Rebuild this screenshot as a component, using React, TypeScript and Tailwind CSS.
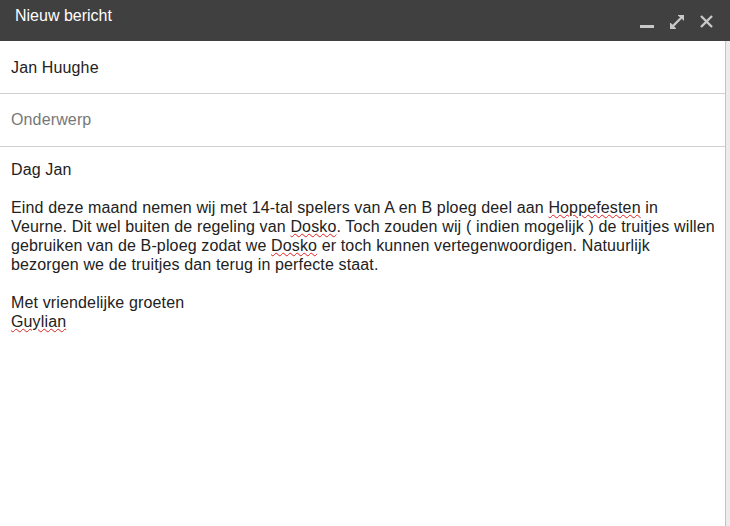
const font = { fontFamily: '"Liberation Sans", Arial, sans-serif' };

function MinimizeIcon() {
  return (
    <svg width="14" height="14" viewBox="0 0 14 14">
      <rect x="0" y="10" width="14" height="3" fill="#c8c8c8" />
    </svg>
  );
}

function ExpandIcon() {
  return (
    <svg width="14" height="14" viewBox="0 0 14 14" fill="#c8c8c8">
      <path d="M8 0h6v6l-2.2-2.2-7.6 7.6L6 13.2V14H0V8h.8l1.8 1.8 7.6-7.6L8 .8z" />
    </svg>
  );
}

function CloseIcon() {
  return (
    <svg width="13" height="13" viewBox="0 0 13 13" stroke="#c8c8c8" strokeWidth="2.4">
      <path d="M1 1l11 11M12 1L1 12" />
    </svg>
  );
}

function Misspelled({ children }: { children: React.ReactNode }) {
  return (
    <span className="underline decoration-wavy decoration-[#e02020] decoration-1 underline-offset-[1px]">
      {children}
    </span>
  );
}

export default function App() {
  return (
    <div className="w-[730px] h-[526px] flex flex-col bg-[#ececec] overflow-hidden" style={font}>
      <div className="h-[41px] shrink-0 bg-[#404040] flex items-center pl-[15px] pr-[17px]">
        <span className="text-white text-[16px] leading-none flex-1 -mt-[10px]">Nieuw bericht</span>
        <div className="flex items-center gap-[16px] mt-[2px]">
          <MinimizeIcon />
          <ExpandIcon />
          <CloseIcon />
        </div>
      </div>
      <div className="flex-1 flex">
        <div className="w-[726px] bg-white border-r border-[#c4c4c4] flex flex-col text-[16px] text-[#222] tracking-[0.14px]">
          <div className="h-[53px] border-b border-[#cfcfcf] flex items-center px-[11px] pt-[1px]">
            Jan Huughe
          </div>
          <div className="h-[53px] border-b border-[#cfcfcf] flex items-center px-[11px] text-[#777]">
            Onderwerp
          </div>
          <div className="pl-[11px] pr-[4px] pt-[13px] leading-[19px] whitespace-nowrap">
            <p>Dag Jan</p>
            <p className="mt-[19px]">
              Eind deze maand nemen wij met 14-tal spelers van A en B ploeg deel aan <Misspelled>Hoppefesten</Misspelled> in
              <br />
              Veurne. Dit wel buiten de regeling van <Misspelled>Dosko</Misspelled>. Toch zouden wij ( indien mogelijk ) de truitjes willen
              <br />
              gebruiken van de B-ploeg zodat we <Misspelled>Dosko</Misspelled> er toch kunnen vertegenwoordigen. Natuurlijk
              <br />
              bezorgen we de truitjes dan terug in perfecte staat.
            </p>
            <p className="mt-[19px]">Met vriendelijke groeten</p>
            <p>
              <Misspelled>Guylian</Misspelled>
            </p>
          </div>
        </div>
      </div>
    </div>
  );
}
